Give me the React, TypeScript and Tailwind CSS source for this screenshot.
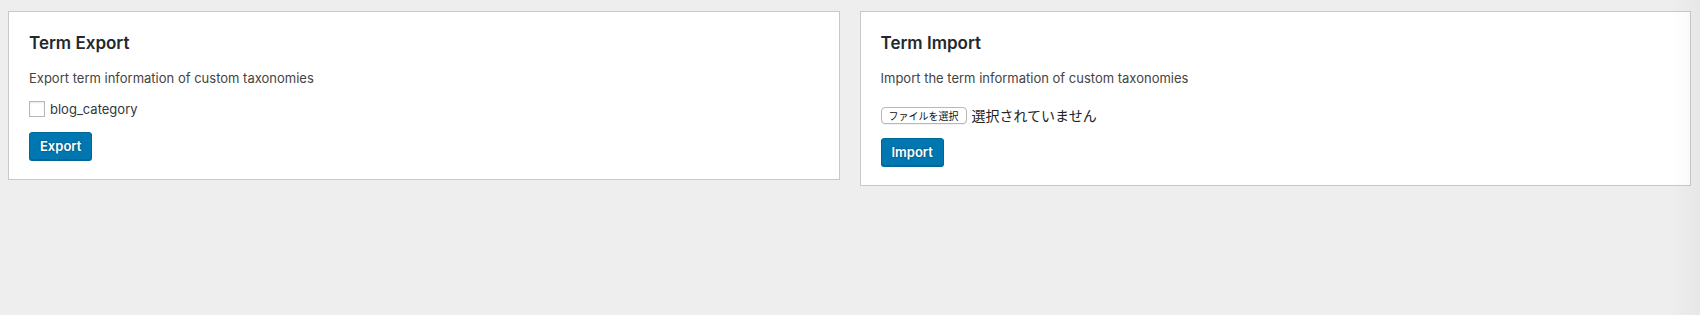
import { useState } from 'react';

const font = { fontFamily: 'Inter, "Liberation Sans", Arial, "Noto Sans CJK JP", sans-serif' };

function PrimaryButton({ label }: { label: string }) {
    return (
        <button
            type="button"
            className="h-[28px] px-[10px] rounded-[3px] border border-[#006799] bg-[#0077b0] text-[13px] font-semibold leading-[26px] text-white shadow-[0_1px_0_#006799] [text-shadow:0_-1px_1px_#006799,1px_0_1px_#006799,0_1px_1px_#006799,-1px_0_1px_#006799]"
        >
            {label}
        </button>
    );
}

function ExportPanel() {
    const [checked, setChecked] = useState(false);
    return (
        <section className="flex-1 border border-[#c8c8c8] bg-white px-5 pt-[19px] pb-[19px]">
            <h2 className="text-[17px] font-semibold leading-6 text-[#23282d]">Term Export</h2>
            <p className="mt-[13px] text-[13px] leading-5 text-[#444]">
                Export term information of custom taxonomies
            </p>
            <label className="mt-[13px] flex items-center gap-[5px] text-[13px] leading-4 text-[#32373c]">
                <input
                    type="checkbox"
                    checked={checked}
                    onChange={(e) => setChecked(e.target.checked)}
                    className="h-4 w-4 appearance-none border border-[#b4b9be] bg-white shadow-[inset_0_1px_2px_rgba(0,0,0,0.1)]"
                />
                blog_category
            </label>
            <div className="mt-[15px]">
                <PrimaryButton label="Export" />
            </div>
        </section>
    );
}

function ImportPanel() {
    return (
        <section className="flex-1 border border-[#c8c8c8] bg-white px-5 pt-[19px] pb-[19px]">
            <h2 className="text-[17px] font-semibold leading-6 text-[#23282d]">Term Import</h2>
            <p className="mt-[13px] text-[13px] leading-5 text-[#444]">
                Import the term information of custom taxonomies
            </p>
            <div className="mt-[19px] flex items-center gap-[5px]">
                <span className="flex h-[17px] w-[86px] items-center justify-center rounded-[4px] border border-[#b8b8b8] bg-white text-[10px] leading-none text-[#111] shadow-[0_1px_0_rgba(0,0,0,0.05)]">
                    ファイルを選択
                </span>
                <span className="text-[14px] leading-4 text-[#222]">選択されていません</span>
            </div>
            <div className="mt-[14px]">
                <PrimaryButton label="Import" />
            </div>
        </section>
    );
}

export default function App() {
    return (
        <div className="relative h-[315px] w-[1700px] overflow-hidden bg-[#eeeeee]" style={font}>
            <div className="flex items-start gap-5 pl-2 pr-[9px] pt-[11px]">
                <ExportPanel />
                <ImportPanel />
            </div>
            <div className="pointer-events-none absolute inset-y-0 right-0 w-[30px] bg-gradient-to-r from-transparent to-black/[0.03]" />
        </div>
    );
}
